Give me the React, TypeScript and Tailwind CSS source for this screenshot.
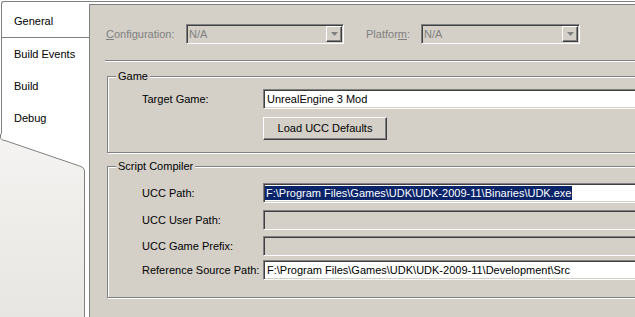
const sunken =
  "border border-t-[#808080] border-l-[#808080] border-b-white border-r-white shadow-[inset_1px_1px_0_#404040,inset_-1px_-1px_0_#d4d0c8]";
const raised =
  "border border-t-white border-l-white border-b-[#404040] border-r-[#404040] shadow-[inset_-1px_-1px_0_#808080]";
const etched =
  "border border-[#808080] shadow-[inset_1px_1px_0_#ffffff,1px_1px_0_#ffffff]";

function Combo({ width }: { width: string }) {
  return (
    <div className={`${sunken} ${width} h-[20px] bg-[#d4d0c8] flex items-center pl-[2px] pr-px py-px`}>
      <span className="flex-1 text-[#808080]">N/A</span>
      <span className={`${raised} w-[16px] h-[16px] bg-[#d4d0c8] flex items-center justify-center`}>
        <svg width="7" height="4" viewBox="0 0 7 4">
          <path d="M0 0h7L3.5 4z" fill="#808080" />
        </svg>
      </span>
    </div>
  );
}

function Field({ label, children, disabled }: { label: string; children?: React.ReactNode; disabled?: boolean }) {
  return (
    <div className="flex items-center">
      <span className="w-[121px] shrink-0">{label}</span>
      <div
        className={`${sunken} w-[400px] h-[20px] flex items-center pl-px ${disabled ? "bg-[#d4d0c8]" : "bg-white"}`}
      >
        {children}
      </div>
    </div>
  );
}

export default function App() {
  const tabs = ["Build Events", "Build", "Debug"];

  return (
    <div className="w-[635px] h-[317px] bg-white overflow-hidden pt-px flex font-['Liberation_Sans',Arial,sans-serif] text-[11px] leading-[13px] text-black">
      {/* tab list on the left */}
      <aside className="w-[89px] shrink-0 flex flex-col">
        <div className="h-[36px] ml-px border-l border-t border-[#808080] rounded-tl-[3px] flex items-center pl-[12px] pt-[3px]">
          General
        </div>
        <div className="ml-px border-l border-t border-[#808080]">
          {tabs.map((t) => (
            <div key={t} className="h-[32px] flex items-center pl-[12px]">
              {t}
            </div>
          ))}
        </div>
        <svg width="89" height="183" viewBox="0 0 89 183" className="block">
          <defs>
            <linearGradient id="tabfill" x1="0" y1="0" x2="0" y2="1">
              <stop offset="0" stopColor="#f4f3f1" />
              <stop offset="1" stopColor="#e8e6e2" />
            </linearGradient>
          </defs>
          <path d="M0 4.5 L5 6.5 L81 32.5 Q84.5 34 84.5 37 V183 H0 Z" fill="url(#tabfill)" />
          <path
            d="M0.5 0 V3 Q0.5 6 5 6.5 L81 32.5 Q84.5 34 84.5 37 V183"
            fill="none"
            stroke="#808080"
            strokeWidth="1"
          />
        </svg>
      </aside>

      {/* property page */}
      <div className="flex-1 min-w-0 flex flex-col border-t border-[#808080]">
        <div className="h-[2px]" />
        <main className="flex-1 bg-[#d4d0c8] border-t border-l border-[#808080] overflow-hidden">
          <div className="mt-[19px] flex items-center">
            <span className="ml-[16px] w-[80px] text-[#808080]">
              <u>C</u>onfiguration:
            </span>
            <Combo width="w-[158px]" />
            <span className="ml-[22px] w-[55px] text-[#808080]">
              Platfor<u>m</u>:
            </span>
            <Combo width="w-[159px]" />
          </div>

          <div className="mt-[16px] ml-[15px] h-0 border-t border-t-[#808080] border-b border-b-white" />

          <fieldset className={`${etched} mt-[8px] ml-[17px] mr-[-20px]`}>
            <legend className="ml-[8px] px-[2px] bg-[#d4d0c8]">Game</legend>
            <div className="pl-[34px] pt-[6px] pb-[12px]">
              <Field label="Target Game:">
                <span className="pl-[2px]">UnrealEngine 3 Mod</span>
              </Field>
              <div className="mt-[8px] pl-[121px]">
                <button className={`${raised} w-[124px] h-[23px] bg-[#d4d0c8] text-[11px]`}>Load UCC Defaults</button>
              </div>
            </div>
          </fieldset>

          <fieldset className={`${etched} mt-[7px] ml-[17px] mr-[-20px]`}>
            <legend className="ml-[8px] px-[2px] bg-[#d4d0c8]">Script Compiler</legend>
            <div className="pl-[34px] pt-[10px] pb-[17px]">
              <Field label="UCC Path:">
                <span className="bg-[#0a246a] text-white px-px leading-[14px]">
                  F:\Program Files\Games\UDK\UDK-2009-11\Binaries\UDK.exe
                </span>
              </Field>
              <div className="mt-[7px]">
                <Field label="UCC User Path:" disabled />
              </div>
              <div className="mt-[6px]">
                <Field label="UCC Game Prefix:" disabled />
              </div>
              <div className="mt-[4px]">
                <Field label="Reference Source Path:">
                  <span className="pl-[2px]">F:\Program Files\Games\UDK\UDK-2009-11\Development\Src</span>
                </Field>
              </div>
            </div>
          </fieldset>
        </main>
      </div>
    </div>
  );
}
